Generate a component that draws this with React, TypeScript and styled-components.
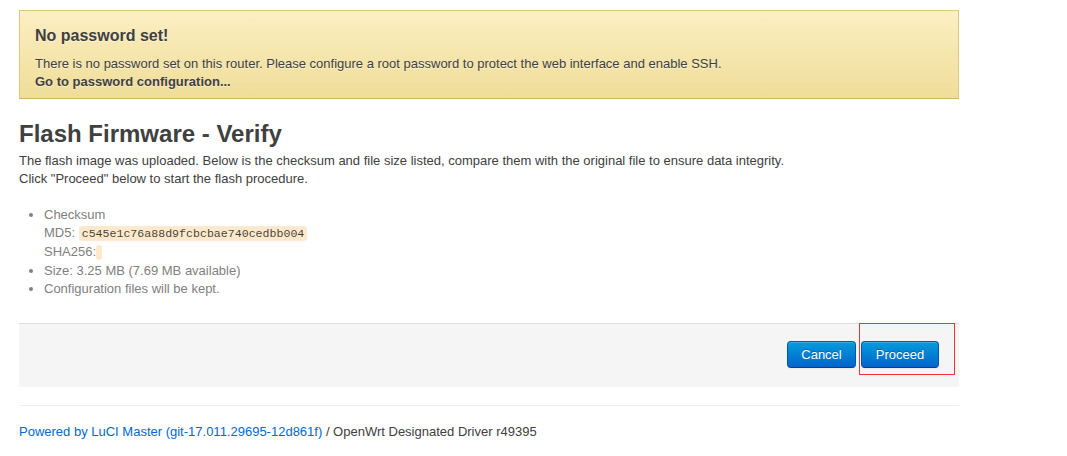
import React from "react";
import styled, { createGlobalStyle } from "styled-components";

const Global = createGlobalStyle`
  html, body { margin: 0; padding: 0; background: #fff; }
  body {
    font-family: "Liberation Sans", Arial, Helvetica, sans-serif;
    font-size: 13px;
    line-height: 18px;
    color: #404040;
  }
`;

const Container = styled.div`
  width: 940px;
  margin: 0 0 0 19px;
  padding-top: 10px;
`;

const Alert = styled.div`
  box-sizing: border-box;
  height: 89px;
  padding: 14px 15px 0 15px;
  background: linear-gradient(to bottom, #fcefc3, #efdd98);
  border: 1px solid #dfc77b;
  border-bottom-color: #cdb56b;
  color: #404040;
  text-shadow: 0 1px 0 rgba(255, 255, 255, 0.5);
`;

const AlertTitle = styled.h4`
  margin: 0 0 8px 0;
  font-size: 16px;
  line-height: 22px;
  font-weight: bold;
`;

const AlertText = styled.p`
  margin: 0;
  font-size: 13px;
  line-height: 18px;
`;

const AlertLink = styled.a`
  display: block;
  color: #404040;
  font-weight: bold;
  text-decoration: none;
`;

const Heading = styled.h2`
  margin: 17px 0 0 0;
  font-size: 24px;
  line-height: 36px;
  font-weight: bold;
  color: #404040;
`;

const Para = styled.p`
  margin: 0 0 18px 0;
`;

const List = styled.ul`
  margin: 0;
  padding: 0 0 0 25px;
  color: #808080;
`;

const Item = styled.li`
  line-height: 18px;
`;

const Code = styled.code`
  font-family: "Liberation Mono", "Courier New", monospace;
  font-size: 11.6px;
  background: #fee9cc;
  color: rgba(0, 0, 0, 0.75);
  padding: 1px 3px;
  border-radius: 3px;
`;

const Actions = styled.div`
  position: relative;
  margin-top: 25px;
  padding: 17px 20px 19px 20px;
  background: #f5f5f5;
  border-top: 1px solid #ddd;
  border-radius: 0 0 3px 3px;
  display: flex;
  justify-content: flex-end;
  gap: 5px;
`;

const Button = styled.button<{ w: number }>`
  font-family: "Liberation Sans", Arial, sans-serif;
  font-size: 13px;
  line-height: 15px;
  height: 27px;
  width: ${(p) => p.w}px;
  padding: 5px 0 6px;
  box-sizing: border-box;
  color: #fff;
  text-shadow: 0 -1px 0 rgba(0, 0, 0, 0.25);
  background: linear-gradient(to bottom, #049cdb, #0064cd);
  border: 1px solid #0057b0;
  border-bottom-color: #003f81;
  border-radius: 4px;
  box-shadow: inset 0 1px 0 rgba(255, 255, 255, 0.2), 0 1px 2px rgba(0, 0, 0, 0.05);
  cursor: pointer;
`;

const Highlight = styled.div`
  position: absolute;
  left: 840px;
  top: -1px;
  width: 96px;
  height: 52px;
  box-sizing: border-box;
  border: 1px solid #e8363a;
  pointer-events: none;
`;

const Footer = styled.footer`
  margin-top: 18px;
  padding-top: 17px;
  border-top: 1px solid #eee;
`;

const FooterLink = styled.a`
  color: #0069d6;
  text-decoration: none;
`;

export default function App() {
  return (
    <>
      <Global />
      <Container>
        <Alert>
          <AlertTitle>No password set!</AlertTitle>
          <AlertText>
            There is no password set on this router. Please configure a root password to protect the web interface and enable SSH.
          </AlertText>
          <AlertLink href="#">Go to password configuration...</AlertLink>
        </Alert>

        <Heading>Flash Firmware - Verify</Heading>
        <Para>
          The flash image was uploaded. Below is the checksum and file size listed, compare them with the original file to ensure data integrity.
          <br />
          Click "Proceed" below to start the flash procedure.
        </Para>
        <List>
          <Item>
            Checksum
            <br />
            MD5: <Code>c545e1c76a88d9fcbcbae740cedbb004</Code>
            <br />
            SHA256: <Code></Code>
          </Item>
          <Item>Size: 3.25 MB (7.69 MB available)</Item>
          <Item>Configuration files will be kept.</Item>
        </List>

        <Actions>
          <Button w={69}>Cancel</Button>
          <Button w={78}>Proceed</Button>
          <Highlight />
        </Actions>

        <Footer>
          <FooterLink href="#">Powered by LuCI Master (git-17.011.29695-12d861f)</FooterLink> / OpenWrt Designated Driver r49395
        </Footer>
      </Container>
    </>
  );
}
